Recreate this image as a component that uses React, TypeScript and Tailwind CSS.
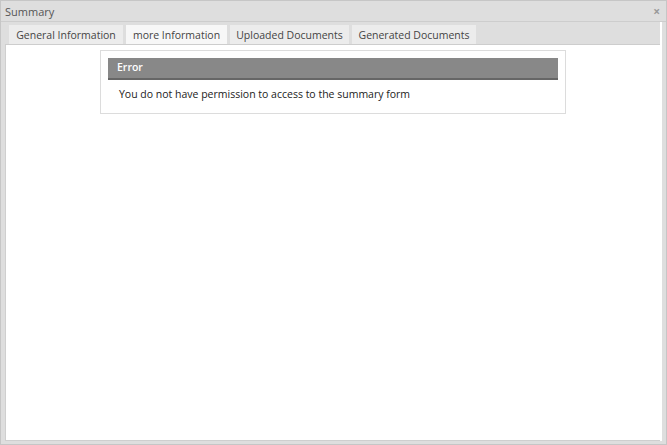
const tabs = [
  { label: "General Information", w: "w-[114px]" },
  { label: "more Information", w: "w-[101px]" },
  { label: "Uploaded Documents", w: "w-[119px]" },
  { label: "Generated Documents", w: "w-[124px]" },
];

export default function App() {
  const active = 1;

  return (
    <div
      className="w-[667px] h-[445px] flex flex-col bg-[#dedede] border border-[#c6c6c6] text-[10.5px]"
      style={{ fontFamily: '"Open Sans", "DejaVu Sans", sans-serif' }}
    >
      <div className="h-[21px] flex items-center justify-between pl-[4px] pr-[6px] pt-[2px] border-b border-[#cdcdcd] text-[#555]">
        <span className="text-[11px]">Summary</span>
        <span className="text-[12px] font-bold text-[#999] leading-none">×</span>
      </div>

      <div className="flex-1 flex flex-col px-[4px] pb-[3px]">
        <div className="flex-1 flex flex-col border-r-2 border-r-white">
          <div className="flex gap-[3px] pt-[3px] pl-[4px] border-b border-[#cdcdcd]">
            {tabs.map((t, i) => (
              <div
                key={t.label}
                className={`h-[19px] ${t.w} flex items-center justify-center pt-[2px] text-[#444] ${
                  i === active ? "bg-[#f7f7f7]" : "bg-[#ececec]"
                }`}
              >
                {t.label}
              </div>
            ))}
          </div>

          <div className="flex-1 bg-white border-b border-l border-[#cfcfcf] flex flex-col items-center pt-[5px]">
            <div className="w-[466px] border border-[#dcdcdc] px-[7px] pt-[7px] pb-[10px]">
              <div className="h-[22px] bg-[#888888] border-b-2 border-[#666] flex items-center pl-[9px] text-white font-semibold">
                Error
              </div>
              <div className="pt-[7px] pl-[11px] text-[#222]">
                You do not have permission to access to the summary form
              </div>
            </div>
          </div>
        </div>
      </div>
    </div>
  );
}
